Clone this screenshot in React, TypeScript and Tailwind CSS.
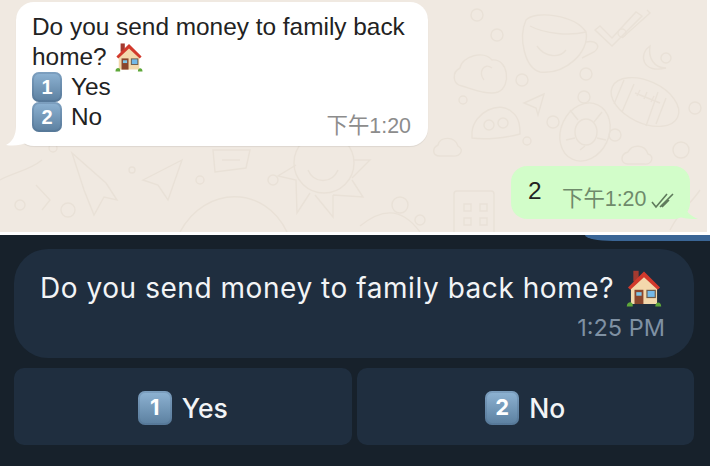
import React from 'react';

const sans = "font-['Liberation_Sans','Noto_Sans_CJK_SC',sans-serif]";
const inter = "font-['Inter','Liberation_Sans',sans-serif]";

function HouseEmoji({ className }: { className: string }) {
  return (
    <svg viewBox="0 0 30 32" className={className}>
      <rect x="6" y="1.5" width="4.5" height="9" fill="#a33a30" />
      <path d="M4 15 L15 5 L26 15 V29.5 H4 Z" fill="#f3d8ac" />
      <path d="M1.5 15.5 L15 2 L28.5 15.5 L26.5 17.5 L15 7 L3.5 17.5 Z" fill="#d2392c" />
      <rect x="7" y="17.5" width="7.5" height="12" fill="#8a452c" />
      <rect x="8.5" y="19.5" width="4.5" height="3" fill="#7fc4e6" />
      <rect x="17" y="17.5" width="8" height="7" fill="#6b5a4a" />
      <rect x="18" y="18.5" width="6" height="5" fill="#74b9e8" />
      <path d="M0.5 31.5 C0.5 27 5.5 27 5.5 30 V31.5 Z M24.5 31.5 C24.5 27 29.5 27 29.5 31.5 Z" fill="#5fa83a" />
    </svg>
  );
}

function Keycap({ n, className }: { n: string; className: string }) {
  return (
    <span className={`inline-flex items-center justify-center rounded-[7px] bg-gradient-to-b from-[#8fb4d4] to-[#5b7f9f] font-bold text-white shadow-[inset_0_0_0_2px_rgba(70,100,130,0.25)] ${className}`}>
      {n}
    </span>
  );
}

// faint wallpaper doodles
function Doodles() {
  return (
    <svg className="absolute inset-0 h-full w-full" viewBox="0 0 707 232" fill="none" stroke="#e9e1d7" strokeWidth="1.4">
      {/* cup */}
      <path d="M526 20 C535 10 575 15 586 32 C590 52 565 75 540 72 C525 68 518 38 526 20 Z" />
      <path d="M530 26 C545 34 570 36 586 32 M537 46 C545 58 560 58 566 50 M586 42 C596 40 602 46 594 52 L582 58" />
      {/* ticks */}
      <path d="M600 26 L612 38 L636 12 L642 16 L612 46 L595 30 Z M622 38 L650 13 L647 10" />
      {/* cloud */}
      <path d="M460 68 C462 56 484 50 492 60 C508 58 512 86 498 92 C488 96 470 88 462 86 C452 84 452 72 460 68 Z" />
      <path d="M492 68 C484 62 478 72 484 80" />
      {/* moon */}
      <path d="M650 46 C638 54 642 74 666 68 C654 68 648 58 650 46 Z" />
      {/* football */}
      <ellipse cx="645" cy="102" rx="36" ry="21" transform="rotate(25 645 102)" />
      <path d="M624 80 L614 104 M634 84 L622 112 M658 92 L646 126 M666 98 L656 124 M635 93 L660 103 M640 90 L637 96 M647 92 L644 99 M654 96 L651 102" />
      {/* eyes bubble */}
      <path d="M472 132 C474 112 500 100 512 112 C520 118 520 128 520 134 C505 138 485 140 472 138 Z" />
      <circle cx="489" cy="125" r="5" /><circle cx="503" cy="123" r="5" />
      {/* paper plane */}
      <path d="M544 94 L524 103 L536 108 L538 115 Z" />
      {/* tortoise */}
      <ellipse cx="585" cy="132" rx="24" ry="30" transform="rotate(25 585 132)" />
      <ellipse cx="586" cy="132" rx="11" ry="13" />
      <path d="M570 110 L578 120 M602 112 L594 122 M566 140 L575 138 M606 140 L597 138 M580 150 L585 146" />
      <circle cx="553" cy="122" r="6" /><circle cx="615" cy="135" r="6" /><circle cx="584" cy="97" r="6" />
      {/* clouds */}
      <path d="M438 145 C440 136 455 136 458 146 C465 150 460 157 452 156 H440 C432 156 432 148 438 145 Z" />
      <path d="M628 152 C632 144 645 144 648 154 C655 156 652 165 644 164 H628 C620 164 620 154 628 152 Z" />
      {/* dots */}
      <circle cx="477" cy="15" r="6" /><circle cx="497" cy="35" r="6" /><circle cx="522" cy="80" r="6" /><circle cx="586" cy="74" r="6" /><circle cx="622" cy="33" r="4" /><circle cx="695" cy="108" r="6" /><circle cx="666" cy="58" r="5" /><circle cx="681" cy="150" r="8" /><circle cx="463" cy="100" r="4" /><circle cx="527" cy="141" r="4" />
      {/* sun */}
      <circle cx="324" cy="163" r="30" />
      <path d="M308 170 C314 184 332 184 338 170 M354 160 L370 160 L352 178 M352 180 L363 197 L333 195 M333 195 L333 217 L315 195 M310 193 L297 213 L296 180 L278 176 L296 165" />
      {/* rocket, planes, speech bubble */}
      <path d="M72 153 L106 183 L117 200 L104 197 L94 215 L84 190 Z" />
      <path d="M182 160 L143 180 L158 185 L168 200 Z" />
      <path d="M213 150 L250 150 L246 168 L215 172 Z M222 160 L240 160" />
      <path d="M180 232 C205 185 265 185 287 232" />
      <path d="M36 185 L50 200 L42 210 M0 180 C15 172 30 170 42 160" />
      {/* building */}
      <rect x="454" y="191" width="40" height="45" rx="3" />
      <path d="M464 204 h7 v7 h-7 Z M480 204 h7 v7 h-7 Z M464 218 h7 v7 h-7 Z M480 218 h7 v7 h-7 Z" />
      <circle cx="400" cy="205" r="8" /><circle cx="273" cy="180" r="5" /><circle cx="53" cy="148" r="4" /><circle cx="20" cy="205" r="5" /><circle cx="68" cy="210" r="7" /><circle cx="200" cy="180" r="4" /><circle cx="132" cy="170" r="3" /><circle cx="420" cy="220" r="5" />
      <path d="M360 226 C380 210 400 205 420 232 M700 190 C690 205 680 210 670 230" />
    </svg>
  );
}

export default function App() {
  return (
    <div className={`flex h-[466px] w-[710px] flex-col overflow-hidden bg-white ${sans}`}>
      <div className="relative mr-[3px] flex h-[232px] flex-col bg-[#f0e9e1]">
        <Doodles />

        {/* incoming bubble */}
        <div className="relative ml-4 mt-[2px] h-[144px] w-[412px] rounded-[18px] bg-white pl-4 pt-[10px] text-[24.4px] leading-[30px] text-[#222] shadow-[0_1px_1px_rgba(0,0,0,0.08)]">
          <svg className="absolute -left-[10px] bottom-0 h-[20px] w-[24px]" viewBox="0 0 24 20">
            <path d="M10 0 C10 10 6 16 0 19 C6 20 16 20 24 15 Z" fill="#fff" />
          </svg>
          <div className="h-[30px]">Do you send money to family back</div>
          <div className="flex h-[30px] items-center gap-[8px]">
            home?
            <HouseEmoji className="h-[30px] w-[28px]" />
          </div>
          <div className="flex h-[30px] items-center gap-[9px]">
            <Keycap n="1" className="h-[30px] w-[30px] text-[20px]" />
            Yes
          </div>
          <div className="flex h-[30px] items-center gap-[9px]">
            <Keycap n="2" className="h-[30px] w-[30px] text-[20px]" />
            No
          </div>
          <span className="absolute bottom-[8px] right-[17px] text-[21.4px] leading-[24px] text-[#8c8c8c]">下午1:20</span>
        </div>

        {/* outgoing bubble */}
        <div className="relative ml-[511px] mt-5 flex h-[53px] w-[179px] rounded-[16px] bg-[#d2fdc9]">
          <svg className="absolute -right-[8px] bottom-0 h-[16px] w-[22px]" viewBox="0 0 22 16">
            <path d="M6 0 C10 8 14 13 22 16 C14 16 6 16 0 12 Z" fill="#d2fdc9" />
          </svg>
          <span className="ml-[17px] mt-[11px] text-[24.4px] leading-[28px] text-[#222]">2</span>
          <span className="absolute left-[51px] top-[21px] text-[21.4px] leading-[24px] text-[#6f8a6b]">下午1:20</span>
          <svg className="absolute left-[140px] top-[26px] h-[18px] w-[24px]" viewBox="0 0 24 18" fill="none" stroke="#5f7a5c" strokeWidth="1.6">
            <path d="M1 10 L5 15 L16 2 M9 15 L22 2 M11 15 L18 8" />
          </svg>
        </div>
      </div>

      <div className="h-[3px] bg-white" />

      {/* telegram part */}
      <div className={`relative flex flex-1 flex-col gap-[10px] bg-[#17212b] pl-[14px] pr-[16px] pt-[14px] ${inter}`}>
        <div className="absolute right-0 top-0 h-[6px] w-[125px] rounded-bl-[28px_6px] bg-[#3a6595]" />
        <div className="relative h-[109px] rounded-[34px] bg-[#1f2e3f] pl-[26px] pt-[20px] text-[28px] leading-[38px] tracking-[0.55px] text-[#f2f4f6]">
          <div className="flex items-center gap-[12px]">
            Do you send money to family back home?
            <HouseEmoji className="h-[38px] w-[36px]" />
          </div>
          <span className="absolute bottom-[16px] right-[29px] text-[23.5px] leading-[28px] tracking-normal text-[#7f91a3]">1:25 PM</span>
        </div>
        <div className="flex gap-[5px]">
          <button className="flex h-[77px] flex-1 items-center justify-center gap-[10px] rounded-[10px] bg-[#1f2e3f] pt-[2px] text-[26.5px] font-medium text-[#f2f4f6]">
            <Keycap n="1" className="h-[34px] w-[34px] text-[22px]" />
            <span className="mt-[2px]">Yes</span>
          </button>
          <button className="flex h-[77px] flex-1 items-center justify-center gap-[10px] rounded-[10px] bg-[#1f2e3f] pt-[2px] text-[26.5px] font-medium text-[#f2f4f6]">
            <Keycap n="2" className="h-[34px] w-[34px] text-[22px]" />
            <span className="mt-[2px]">No</span>
          </button>
        </div>
      </div>
    </div>
  );
}
